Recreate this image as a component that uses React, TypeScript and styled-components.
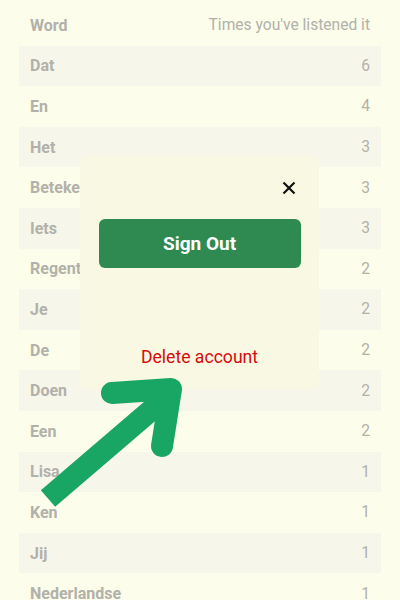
import { createGlobalStyle } from 'styled-components';
import styled from 'styled-components';

const GlobalStyle = createGlobalStyle`
  html, body {
    margin: 0;
    padding: 0;
    background: #fcfdea;
    font-family: Roboto, "Liberation Sans", sans-serif;
  }
`;

const Page = styled.div`
  position: relative;
  width: 400px;
  height: 600px;
  overflow: hidden;
  background: #fcfdea;
`;

const Table = styled.div`
  display: flex;
  flex-direction: column;
  padding: 5px 19px 0;
`;

const Row = styled.div<{ $striped?: boolean }>`
  display: flex;
  justify-content: space-between;
  align-items: center;
  height: 40.6px;
  padding: 0 11px;
  background: ${(p) => (p.$striped ? '#f7f6ea' : 'transparent')};
  color: #b2b1aa;
  font-size: 16px;
`;

const Word = styled.span`
  font-weight: 700;
`;

const Count = styled.span`
  font-weight: 400;
  font-size: 15.6px;
`;

const Overlay = styled.div`
  position: absolute;
  left: 80px;
  top: 156px;
  width: 239px;
  height: 233px;
  box-sizing: border-box;
  border-radius: 8px;
  background: #f9f8e2;
  display: flex;
  flex-direction: column;
  align-items: center;
  padding: 21px 19px 0;
`;

const CloseRow = styled.div`
  align-self: stretch;
  display: flex;
  justify-content: flex-end;
  height: 22px;
`;

const CloseButton = styled.button`
  border: none;
  background: none;
  padding: 0;
  width: 22px;
  height: 22px;
  display: flex;
  align-items: center;
  justify-content: center;
  cursor: pointer;
`;

const SignOut = styled.button`
  margin-top: 20px;
  width: 202px;
  height: 49px;
  border: none;
  border-radius: 6px;
  background: #2e8a50;
  color: #ffffff;
  font-family: Roboto, "Liberation Sans", sans-serif;
  font-size: 19px;
  font-weight: 700;
  cursor: pointer;
`;

const DeleteLink = styled.button`
  margin-top: 79px;
  border: none;
  background: none;
  padding: 0;
  color: #d40b0b;
  font-family: Roboto, "Liberation Sans", sans-serif;
  font-size: 17.6px;
  cursor: pointer;
`;

const Arrow = styled.svg`
  position: absolute;
  left: 0;
  top: 0;
  pointer-events: none;
`;

const rows: [string, number][] = [
  ['Dat', 6],
  ['En', 4],
  ['Het', 3],
  ['Betekent', 3],
  ['Iets', 3],
  ['Regent', 2],
  ['Je', 2],
  ['De', 2],
  ['Doen', 2],
  ['Een', 2],
  ['Lisa', 1],
  ['Ken', 1],
  ['Jij', 1],
  ['Nederlandse', 1],
];

const App = () => {
  return (
    <Page>
      <GlobalStyle />
      <Table>
        <Row>
          <Word>Word</Word>
          <Count>Times you've listened it</Count>
        </Row>
        {rows.map(([word, count], i) => (
          <Row key={word} $striped={i % 2 === 0}>
            <Word>{word}</Word>
            <Count>{count}</Count>
          </Row>
        ))}
      </Table>

      <Overlay>
        <CloseRow>
          <CloseButton aria-label="close">
            <svg width="14" height="14" viewBox="0 0 14 14">
              <path d="M1.5 1.5 L12.5 12.5 M12.5 1.5 L1.5 12.5" stroke="#111" strokeWidth="2.2" />
            </svg>
          </CloseButton>
        </CloseRow>
        <SignOut>Sign Out</SignOut>
        <DeleteLink>Delete account</DeleteLink>
      </Overlay>

      <Arrow width="400" height="600" viewBox="0 0 400 600">
        <line x1="48" y1="498.5" x2="170" y2="394" stroke="#19a563" strokeWidth="22" />
        <polyline
          points="112,393 171,389 162,446"
          fill="none"
          stroke="#19a563"
          strokeWidth="22"
          strokeLinecap="round"
          strokeLinejoin="round"
        />
      </Arrow>
    </Page>
  );
};

export default App;
